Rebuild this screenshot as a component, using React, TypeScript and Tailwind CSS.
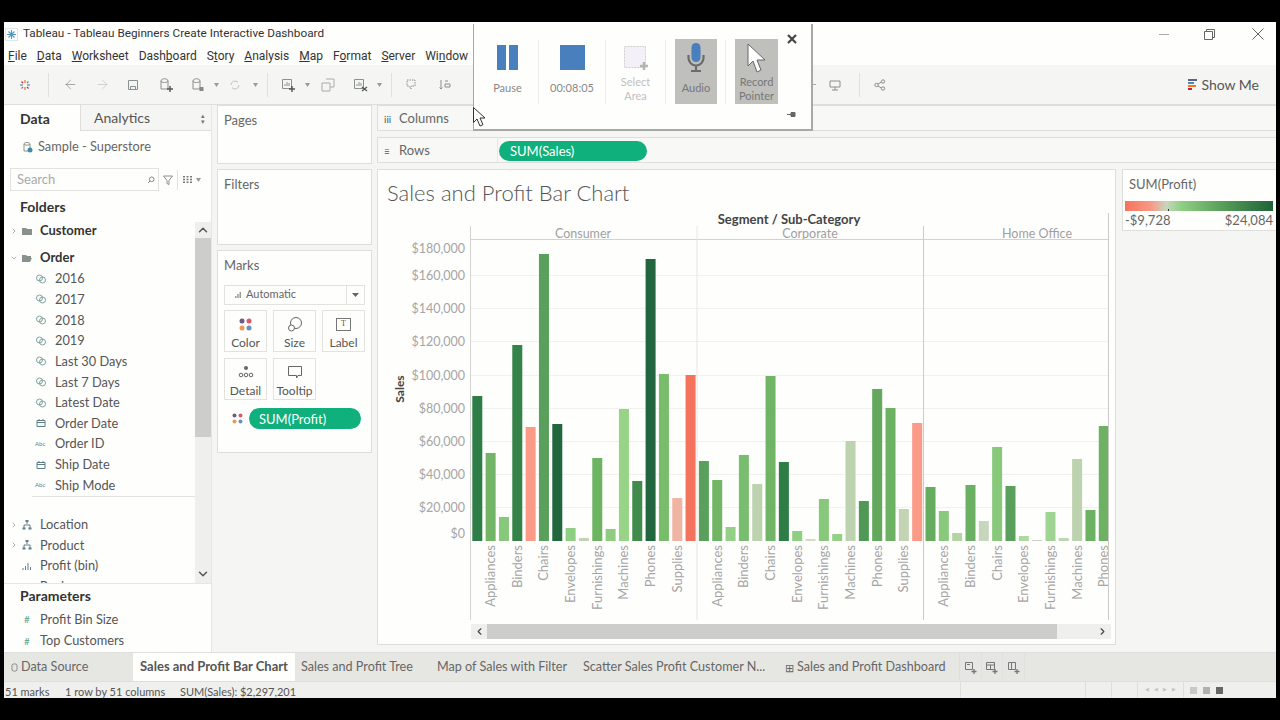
import { ReactNode } from "react";
import { ArrowLeft, ArrowRight, ChevronDown, ChevronLeft, ChevronRight, ChevronUp } from "lucide-react";

const menuItems: [string, string, string][] = [
  ["", "F", "ile"],
  ["", "D", "ata"],
  ["", "W", "orksheet"],
  ["Dash", "b", "oard"],
  ["S", "t", "ory"],
  ["", "A", "nalysis"],
  ["", "M", "ap"],
  ["F", "o", "rmat"],
  ["", "S", "erver"],
  ["Wi", "n", "dow"],
];

const orderFields = [
  { name: "2016", kind: "calc" },
  { name: "2017", kind: "calc" },
  { name: "2018", kind: "calc" },
  { name: "2019", kind: "calc" },
  { name: "Last 30 Days", kind: "calc" },
  { name: "Last 7 Days", kind: "calc" },
  { name: "Latest Date", kind: "calc" },
  { name: "Order Date", kind: "date" },
  { name: "Order ID", kind: "abc" },
  { name: "Ship Date", kind: "date" },
  { name: "Ship Mode", kind: "abc" },
];

const categories = ["Appliances", "Binders", "Chairs", "Envelopes", "Furnishings", "Machines", "Phones", "Supplies"];

const ticks = [
  { label: "$180,000", y: 253 },
  { label: "$160,000", y: 280 },
  { label: "$140,000", y: 313 },
  { label: "$120,000", y: 346 },
  { label: "$100,000", y: 380 },
  { label: "$80,000", y: 413 },
  { label: "$60,000", y: 446 },
  { label: "$40,000", y: 479 },
  { label: "$20,000", y: 512 },
  { label: "$0", y: 538 },
];

// bar top in page pixels + colour, one list per segment
const bars: [number, string][][] = [
  [
    [396, "#2f7d46"], [453, "#72b566"], [517, "#87c87a"], [345, "#358348"], [427, "#fb9a86"], [254, "#58a05b"],
    [424, "#22663d"], [528, "#8fcf82"], [538, "#c3d4b4"], [458, "#6cb462"], [529, "#8fcc80"], [409, "#98d488"],
    [481, "#418c4d"], [259, "#22663f"], [374, "#78bd6c"], [498, "#f0b4a2"], [375, "#f4735c"],
  ],
  [
    [461, "#58a05b"], [480, "#72b566"], [527, "#95d088"], [455, "#79bd6e"], [484, "#bdd2ae"], [376, "#70b566"],
    [462, "#2f7d46"], [531, "#8fcf82"], [539, "#d0dcc5"], [499, "#87c87a"], [534, "#95d088"], [441, "#bdd2ae"],
    [501, "#4f9855"], [389, "#63a85c"], [408, "#6db263"], [509, "#c3d4b4"], [423, "#fb9a86"],
  ],
  [
    [487, "#65ac5e"], [511, "#88c97b"], [533, "#b4d4a4"], [485, "#6cb163"], [521, "#c8d6bc"], [447, "#87c87a"],
    [486, "#58a05b"], [536, "#aed8a0"], [540, "#cccccc"], [512, "#a0d492"], [538, "#bfd6b0"], [459, "#bdd2ae"],
    [510, "#6cb263"], [426, "#6db263"],
  ],
];

const Ico = ({ className = "", w = 16, h = 16, children }: { className?: string; w?: number; h?: number; children: ReactNode }) => (
  <svg width={w} height={h} viewBox={`0 0 ${w} ${h}`} fill="none" stroke="#8a8f90" strokeWidth="1" className={"shrink-0 " + className}>
    {children}
  </svg>
);

const Logo = () => (
  <Ico w={12} h={12}>
    <g strokeWidth="1.2">
      <path d="M6 1v3M6 8v3" stroke="#e8762c" />
      <path d="M1 6h3M8 6h3" stroke="#5b6591" />
      <path d="M2.500 2.500l1.500 1.500M8 8l1.500 1.500" stroke="#c72035" />
      <path d="M9.500 2.500L8 4M4 8L2.500 9.500" stroke="#5b879b" />
    </g>
  </Ico>
);

const TitleIcon = () => (
  <svg width="13" height="13" viewBox="0 0 13 13" fill="none" className="shrink-0">
    <path d="M0.500 0.500h12v12h-12z" stroke="#b9cfdc" strokeDasharray="1 1" />
    <path d="M6.500 2v9M2 6.500h9M3.500 3.500l6 6M9.500 3.500l-6 6" stroke="#4f9cc0" strokeWidth="1.100" />
  </svg>
);

const Cylinder = ({ badge }: { badge: ReactNode }) => (
  <Ico w={14} h={16}>
    <path d="M2 4c0-3 7-3 7 0v8H2zM2 4c0 2 7 2 7 0" />
    {badge}
  </Ico>
);

const Caret = () => (
  <svg width="5" height="4" viewBox="0 0 5 4" className="shrink-0">
    <path d="M0 0h5L2.500 4z" fill="#999" />
  </svg>
);

const Sheet = ({ badge }: { badge: ReactNode }) => (
  <Ico w={15} h={15}>
    <path d="M1.500 2.500h9v9h-9z" />
    <path d="M4 9V7M6 9V5M8 9V6" />
    {badge}
  </Ico>
);

const Toolbar = () => (
  <div className="flex h-10 shrink-0 items-center border-b border-[#dededa] bg-[#f5f5f3]">
    <div className="ml-[15px] w-[29px]">
      <Logo />
    </div>
    <div className="h-6 w-px bg-[#e0e0dc]" />
    <ArrowLeft size={15} strokeWidth={1} color="#777" className="ml-[14px] shrink-0" />
    <ArrowRight size={15} strokeWidth={1} color="#bbb" className="ml-[17px] shrink-0" />
    <Ico w={12} h={12} className="ml-[17px]">
      <path d="M1.500 1.500h9v9h-9zM3.500 10.500v-3h5v3" />
    </Ico>
    <div className="ml-[20px]">
      <Cylinder badge={<path d="M11 9v6M8 12h6" stroke="#555" strokeWidth="1.400" />} />
    </div>
    <div className="ml-[18px]">
      <Cylinder badge={<path d="M8.500 10h4v4h-4z" fill="#888" stroke="none" />} />
    </div>
    <div className="ml-[9px]">
      <Caret />
    </div>
    <Ico w={12} h={12} className="ml-[10px]">
      <path d="M2 6a4 4 0 0 1 7-2.600M10 6a4 4 0 0 1-7 2.600" stroke="#c4c4c4" />
    </Ico>
    <div className="ml-[12px]">
      <Caret />
    </div>
    <div className="ml-[9px] h-6 w-px bg-[#e0e0dc]" />
    <div className="ml-[13px]">
      <Sheet badge={<path d="M11 9v6M8 12h6" stroke="#555" strokeWidth="1.400" />} />
    </div>
    <div className="ml-[9px]">
      <Caret />
    </div>
    <Ico w={14} h={14} className="ml-[11px]">
      <path d="M1 5h8v8H1zM5 1h8v8H9" stroke="#aaa" />
    </Ico>
    <div className="ml-[18px]">
      <Sheet badge={<path d="M9 10l5 4M14 10l-5 4" stroke="#555" strokeWidth="1.300" />} />
    </div>
    <div className="ml-[9px]">
      <Caret />
    </div>
    <div className="ml-[9px] h-6 w-px bg-[#e0e0dc]" />
    <Ico w={14} h={14} className="ml-[13px]">
      <path d="M2 2h8v6H6v3l-2-3H2z" strokeDasharray="1.500 1" />
    </Ico>
    <Ico w={14} h={14} className="ml-[19px]">
      <path d="M3 2v9M1.500 9.500L3 11l1.500-1.500M7 3h3M7 6h5v3H7z" />
    </Ico>
    <div className="ml-[361px] h-px w-[3px] bg-[#aaa]" />
    <Ico w={12} h={12} className="ml-[13px]">
      <path d="M1 2h10v6H1zM6 8v3M3 11h6" />
    </Ico>
    <div className="ml-[18px] h-6 w-px bg-[#e0e0dc]" />
    <Ico w={12} h={12} className="ml-[14px]">
      <circle cx="2.500" cy="6" r="1.700" />
      <circle cx="9" cy="2.500" r="1.700" />
      <circle cx="9" cy="9.500" r="1.700" />
      <path d="M4 5l3.500-2M4 7l3.500 2" />
    </Ico>
    <div className="ml-auto mr-[17px] flex items-center gap-1">
      <svg width="9" height="11" viewBox="0 0 9 11" className="shrink-0">
        <path d="M0 0h9v2H0z" fill="#5b6591" />
        <path d="M0 3h6v2H0z" fill="#5b879b" />
        <path d="M0 6h8v2H0z" fill="#e8762c" />
        <path d="M0 9h4v2H0z" fill="#c72035" />
      </svg>
      <span className="text-[14px] text-[#555]">Show Me</span>
    </div>
  </div>
);

const CalcIcon = () => (
  <Ico w={12} h={12}>
    <circle cx="4.500" cy="5" r="3" stroke="#7fa3a0" />
    <circle cx="7.500" cy="7" r="3" stroke="#7fa3a0" />
  </Ico>
);

const FieldIcon = ({ kind }: { kind: string }) => {
  if (kind === "calc") return <CalcIcon />;
  if (kind === "date")
    return (
      <Ico w={12} h={12}>
        <path d="M2 3.500h8v6H2zM2 5.500h8M4 2v1.500M8 2v1.500" stroke="#5d7f8a" />
      </Ico>
    );
  return <span className="w-3 text-[6px] leading-3 text-[#5d7f8a]">Abc</span>;
};

const Chevron = ({ open }: { open?: boolean }) => (
  <span className="flex w-[17px] shrink-0 pl-[6px]">
    {open ? <ChevronDown size={8} color="#888" /> : <ChevronRight size={8} color="#888" />}
  </span>
);

const HierIcon = () => (
  <Ico w={12} h={12} className="mr-[7px]">
    <path d="M6 2v3M3 9V6h6v3" stroke="#5d7f8a" />
    <path d="M4.500 1h3v2h-3zM1.500 8.500h3v2h-3zM7.500 8.500h3v2h-3z" fill="#5d7f8a" stroke="none" />
  </Ico>
);

const DataPane = () => (
  <div className="flex h-full w-[208px] shrink-0 flex-col border-r border-[#e6e6e3] bg-[#fefefd]">
    <div className="flex h-[26px] items-stretch">
      <div className="flex w-[77px] items-center border-r border-[#dededa] pl-4 text-[14px] font-bold text-[#333]">Data</div>
      <div className="flex flex-1 items-center justify-between border-b border-[#dededa] bg-[#f5f5f3] pl-[13px] pr-[6px] text-[14px] text-[#555]">
        Analytics
        <span className="text-[7px] leading-[6px] text-[#777]">
          ▴<br />▾
        </span>
      </div>
    </div>
    <div className="flex h-[30px] items-center gap-[5px] pl-[18px] pt-[2px] text-[12.800px] text-[#666]">
      <Ico w={11} h={12}>
        <path d="M2 3c0-2 6-2 6 0v7H2zM2 3c0 1.500 6 1.500 6 0" />
        <circle cx="8" cy="9" r="2.500" fill="#3f8ea8" stroke="none" />
      </Ico>
      Sample - Superstore
    </div>
    <div className="ml-[6px] mt-[7px] flex h-[23px] items-center">
      <div className="flex h-[23px] w-[149px] items-center justify-between border border-[#e2e2df] pl-[6px] pr-[3px] text-[13px] text-[#aaa]">
        Search
        <svg width="8" height="8" viewBox="0 0 8 8" fill="none" stroke="#888" className="shrink-0">
          <circle cx="4.700" cy="3.300" r="2.300" />
          <path d="M3 5L1 7" />
        </svg>
      </div>
      <Ico w={12} h={12} className="ml-[3px]">
        <path d="M1.500 2h9L7 6.500V10.500L5 9.500V6.500z" />
      </Ico>
      <div className="ml-[3px] h-5 w-px bg-[#e2e2df]" />
      <svg width="9" height="7" viewBox="0 0 9 7" fill="#777" className="ml-[5px] shrink-0">
        <path d="M0 0h2v1.500H0zM3.500 0h2v1.500h-2zM7 0h2v1.500H7zM0 2.700h2v1.500H0zM3.500 2.700h2v1.500h-2zM7 2.700h2v1.500H7zM0 5.400h2v1.500H0zM3.500 5.400h2v1.500h-2zM7 5.400h2v1.500H7z" />
      </svg>
      <div className="ml-[4px]">
        <Caret />
      </div>
    </div>
    <div className="mt-[5px] h-[22px] pl-4 text-[14px] font-bold leading-[22px] text-[#333]">Folders</div>
    <div className="flex h-[366px] overflow-hidden border-b border-[#e6e6e3]">
      <div className="min-w-0 flex-1 overflow-hidden pt-[3px]">
        <div className="flex h-[20px] items-center text-[13px] font-bold text-[#333]">
          <Chevron />
          <Ico w={12} h={12} className="mr-[7px]">
            <path d="M1 3h4l1 1h5v6H1z" fill="#8a8f90" stroke="none" />
          </Ico>
          Customer
        </div>
        <div className="mt-[7px] flex h-[20px] items-center text-[13px] font-bold text-[#333]">
          <Chevron open />
          <Ico w={12} h={12} className="mr-[7px]">
            <path d="M1 3h4l1 1h4v2H3L1 10zM3 6h8l-2 4H1z" fill="#8a8f90" stroke="none" />
          </Ico>
          Order
        </div>
        <div className="mt-[0.500px] flex flex-col">
          {orderFields.map((f) => (
            <div key={f.name} className="flex h-[20.670px] items-center pl-[31px] text-[12.800px] text-[#555]">
              <span className="mr-2 flex w-3 justify-center">
                <FieldIcon kind={f.kind} />
              </span>
              {f.name}
            </div>
          ))}
        </div>
        <div className="ml-7 border-b border-[#e3e3e0]" />
        <div className="mt-[17.500px] flex h-[20.670px] items-center text-[12.800px] text-[#555]">
          <Chevron />
          <HierIcon />
          Location
        </div>
        <div className="flex h-[20.670px] items-center text-[12.800px] text-[#555]">
          <Chevron />
          <HierIcon />
          Product
        </div>
        <div className="flex h-[20.670px] items-center pl-[17px] text-[12.800px] text-[#555]">
          <Ico w={12} h={12} className="mr-[7px]">
            <path d="M2 10V8M4.500 10V6M7 10V3M9.500 10V7" stroke="#5d7f8a" />
          </Ico>
          Profit (bin)
        </div>
        <div className="flex h-[20.670px] items-center pl-[36px] text-[12.800px] text-[#555]">Region</div>
      </div>
      <div className="mt-[4px] flex w-[16px] shrink-0 flex-col items-center bg-[#efefed]">
        <ChevronUp size={14} strokeWidth={2.500} color="#555" className="h-[16px] shrink-0" />
        <div className="h-[199px] w-full bg-[#cdcdcb]" />
        <ChevronDown size={14} strokeWidth={2.500} color="#555" className="mb-[2px] mt-auto shrink-0" />
      </div>
    </div>
    <div className="pl-4 pt-[1px] text-[14px] font-bold leading-[22px] text-[#333]">Parameters</div>
    <div className="mt-[2px] flex h-[21px] items-center pl-[17px] text-[12.800px] text-[#555]">
      <span className="mr-[7px] w-3 text-center text-[10px] text-[#5aa28a]">#</span>Profit Bin Size
    </div>
    <div className="mt-[1px] flex h-[20px] items-center pl-[17px] text-[12.800px] text-[#555]">
      <span className="mr-[7px] w-3 text-center text-[10px] text-[#5aa28a]">#</span>Top Customers
    </div>
  </div>
);

const MarkCard = ({ label, icon }: { label: string; icon: ReactNode }) => (
  <div className="flex h-[42px] w-[43px] flex-col items-center border border-[#e2e2df] pt-[5px] text-[12px] text-[#555]">
    <div className="flex h-[17px] items-center">{icon}</div>
    <span className="mt-[2px] leading-[15px]">{label}</span>
  </div>
);

const CardsPane = () => (
  <div className="flex h-full w-[160px] shrink-0 flex-col gap-[5px] pl-[5px]">
    <div className="h-[59px] border border-[#dededa] bg-[#fefefd] px-[6px] pt-[5px] text-[13px] text-[#666]">Pages</div>
    <div className="h-[76px] border border-[#dededa] bg-[#fefefd] px-[6px] pt-[5px] text-[13px] text-[#666]">Filters</div>
    <div className="h-[203px] border border-[#dededa] bg-[#fefefd] px-[6px] pt-[5px]">
      <div className="text-[13px] text-[#666]">Marks</div>
      <div className="mt-[9px] flex h-[20px] w-[141px] items-center border border-[#e2e2df] pl-[10px] text-[11px] text-[#666]">
        <svg width="6" height="6" viewBox="0 0 6 6" fill="#999" className="mr-[5px] shrink-0">
          <path d="M0 6V4h1.500v2zM2.200 6V2h1.500v4zM4.500 6V0H6v6z" />
        </svg>
        Automatic
        <div className="ml-auto flex h-full w-[18px] items-center justify-center border-l border-[#e2e2df]">
          <svg width="7" height="4" viewBox="0 0 7 4" className="shrink-0">
            <path d="M0 0h7L3.500 4z" fill="#666" />
          </svg>
        </div>
      </div>
      <div className="mt-[5px] flex gap-[6px]">
        <MarkCard
          label="Color"
          icon={
            <svg width="13" height="13" viewBox="0 0 13 13" className="shrink-0">
              <circle cx="3" cy="3" r="2.500" fill="#6d5a88" />
              <circle cx="10" cy="3" r="2.500" fill="#dd5a64" />
              <circle cx="3" cy="10" r="2.500" fill="#ea9a55" />
              <circle cx="10" cy="10" r="2.500" fill="#6a8fc0" />
            </svg>
          }
        />
        <MarkCard
          label="Size"
          icon={
            <Ico w={16} h={16}>
              <circle cx="9" cy="7" r="5.500" stroke="#666" />
              <circle cx="4.500" cy="12" r="3" stroke="#666" fill="#fefefd" />
            </Ico>
          }
        />
        <MarkCard
          label="Label"
          icon={
            <div className="flex h-[13px] w-[15px] items-center justify-center border border-[#777] font-['Liberation_Serif',serif] text-[8px] leading-none text-[#555]">T</div>
          }
        />
      </div>
      <div className="mt-[6px] flex gap-[6px]">
        <MarkCard
          label="Detail"
          icon={
            <svg width="16" height="14" viewBox="0 0 16 14" fill="none" stroke="#666" className="shrink-0">
              <circle cx="8" cy="3" r="2" fill="#666" stroke="none" />
              <circle cx="3" cy="10" r="1.800" />
              <circle cx="8" cy="10" r="1.800" />
              <circle cx="13" cy="10" r="1.800" />
            </svg>
          }
        />
        <MarkCard
          label="Tooltip"
          icon={
            <Ico w={16} h={14}>
              <path d="M1.500 1.500h13v9H11L9.500 13V10.500h-8z" stroke="#666" />
            </Ico>
          }
        />
      </div>
      <div className="mt-[8px] flex items-center">
        <svg width="11" height="11" viewBox="0 0 11 11" className="ml-[8px] shrink-0">
          <circle cx="2.500" cy="2.500" r="2" fill="#6d5a88" />
          <circle cx="8.500" cy="2.500" r="2" fill="#dd5a64" />
          <circle cx="2.500" cy="8.500" r="2" fill="#ea9a55" />
          <circle cx="8.500" cy="8.500" r="2" fill="#6a8fc0" />
        </svg>
        <div className="ml-[6px] flex h-[21px] w-[112px] items-center rounded-full bg-[#0fb07c] pl-[10px] pt-[3px] text-[13px] text-white">SUM(Profit)</div>
      </div>
    </div>
  </div>
);

const Shelf = ({ icon, label, children }: { icon: string; label: string; children?: ReactNode }) => (
  <div className="flex h-[26px] items-center border border-r-0 border-[#dededa] bg-[#f8f8f6]">
    <div className="flex h-full w-[120px] shrink-0 items-center gap-2 border-r border-[#e8e8e5] pl-[6px] pt-[2px] text-[13px] text-[#666]">
      <span className="w-[7px] text-[10px] leading-none text-[#555]">{icon}</span>
      {label}
    </div>
    {children}
  </div>
);

const Chart = () => (
  <svg width="737" height="418" viewBox="378 206 737 418" className="block font-[Lato,sans-serif]">
    <defs>
      <clipPath id="plot">
        <rect x="471" y="206" width="637" height="418" />
      </clipPath>
    </defs>
    <text x="789" y="224" textAnchor="middle" fontSize="13" fontWeight="700" fill="#444">
      Segment / Sub-Category
    </text>
    {[
      ["Consumer", 583],
      ["Corporate", 810],
      ["Home Office", 1037],
    ].map(([t, x]) => (
      <text key={t} x={x} y="238" textAnchor="middle" fontSize="12.500" fill="#a0a0a0">
        {t}
      </text>
    ))}
    {[275, 308, 341, 375, 408, 441, 474, 507].map((y) => (
      <line key={y} x1="471" x2="1108" y1={y + 0.5} y2={y + 0.5} stroke="#f1f1ef" />
    ))}
    <line x1="471" x2="1108" y1="239.500" y2="239.500" stroke="#d2d2d0" />
    <line x1="470.500" x2="470.500" y1="226" y2="620" stroke="#d2d2d0" />
    <line x1="697" x2="697" y1="226" y2="620" stroke="#e6e6e4" />
    <line x1="923.500" x2="923.500" y1="226" y2="620" stroke="#cbcbc9" />
    <line x1="1108.500" x2="1108.500" y1="213" y2="620" stroke="#cbcbc9" />
    {ticks.map((t) => (
      <text key={t.label} x="465" y={t.y} textAnchor="end" fontSize="12.500" fill="#a5a5a5">
        {t.label}
      </text>
    ))}
    <text transform="rotate(-90 404 389)" x="404" y="389" textAnchor="middle" fontSize="12" fontWeight="700" fill="#444">
      Sales
    </text>
    <g clipPath="url(#plot)">
      {bars.map((seg, s) =>
        seg.map(([top, color], i) => (
          <rect key={s + "-" + i} x={472.300 + s * 226.600 + i * 13.330} y={top} width="10" height={541 - top} fill={color} />
        )),
      )}
      {[0, 1, 2].map((s) =>
        categories.slice(0, s === 2 ? 7 : 8).map((c, n) => {
          const x = 472.300 + s * 226.600 + (2 * n + 1) * 13.330 + 9.500;
          return (
            <text key={s + c} transform={`rotate(-90 ${x} 545)`} x={x} y="545" textAnchor="end" fontSize="13" fill="#a5a5a5">
              {c}
            </text>
          );
        }),
      )}
    </g>
  </svg>
);

const ChartCard = () => (
  <div className="h-[476px] w-[739px] shrink-0 border border-[#dededa] bg-[#fefefd]">
    <div className="h-[36px] pl-[9px] pt-[9px] text-[22px] font-light leading-[28px] text-[#555]">Sales and Profit Bar Chart</div>
    <Chart />
    <div className="ml-[93px] flex h-[15px] w-[640px] items-center bg-[#efefed]">
      <span className="flex w-[16px] justify-center">
        <ChevronLeft size={11} strokeWidth={2.500} color="#444" />
      </span>
      <div className="h-full w-[570px] bg-[#cdcdcb]" />
      <span className="ml-auto mr-[1px] flex w-[16px] justify-center">
        <ChevronRight size={11} strokeWidth={2.500} color="#444" />
      </span>
    </div>
  </div>
);

const LegendCard = () => (
  <div className="ml-[6px] h-[62px] flex-1 border border-r-0 border-[#dededa] bg-[#fefefd] px-[2px] pt-[5px] text-[#666]">
    <div className="pl-[4px] text-[13px] leading-[18px]">SUM(Profit)</div>
    <div className="relative mt-[8px] h-[10px] w-[148px] bg-[linear-gradient(90deg,#f4735c_0%,#f79b88_18%,#c8d6bc_28%,#8fcf82_38%,#58a05b_65%,#1f6239_100%)]">
      <span className="absolute bottom-0 left-[43px] h-[2px] w-px bg-[#333]" />
    </div>
    <div className="flex w-[148px] justify-between text-[13px] leading-[19px]">
      <span>-$9,728</span>
      <span>$24,084</span>
    </div>
  </div>
);

const RecorderButton = ({ label, className = "", children }: { label: ReactNode; className?: string; children: ReactNode }) => (
  <div className={"flex h-[65px] flex-col items-center text-center text-[11px] leading-[14px] " + className}>
    {children}
    {label}
  </div>
);

const Sep = () => <div className="mt-[1px] h-[64px] w-px bg-[#eeeeec]" />;

const RecorderPopup = () => (
  <div className="absolute left-[473px] top-[24px] flex h-[107px] w-[340px] border-b-2 border-l border-r-2 border-[#a8a8a4] bg-[#fefefd] pt-[15px]">
    <RecorderButton label={<span className="mt-[11px] text-[#888]">Pause</span>} className="w-[67px]">
      <div className="mt-[6px] flex h-[25px] gap-[3px]">
        <div className="w-[9px] bg-[#4a7fbd]" />
        <div className="w-[9px] bg-[#4a7fbd]" />
      </div>
    </RecorderButton>
    <div className="-ml-[3px]">
      <Sep />
    </div>
    <RecorderButton label={<span className="mt-[11px] text-[#888]">00:08:05</span>} className="w-[66px]">
      <div className="mt-[6px] h-[25px] w-[25px] bg-[#4a7fbd]" />
    </RecorderButton>
    <Sep />
    <RecorderButton label={<span className="mt-[2px] text-[#c0c0c0]">Select<br />Area</span>} className="w-[59px]">
      <svg width="26" height="27" viewBox="0 0 26 27" className="ml-[3px] mt-[7px] shrink-0">
        <path d="M0.500 0.500h21v21h-21z" fill="#f4f0f7" stroke="#cfcfcf" strokeDasharray="2 1" />
        <path d="M20 16v8M16 20h8" stroke="#b5b5b5" strokeWidth="2.500" />
      </svg>
    </RecorderButton>
    <Sep />
    <div className="ml-[9px] w-[42px]">
      <RecorderButton label={<span className="mt-[8px] text-[#777]">Audio</span>} className="bg-[#bfbfbc]">
        <svg width="18" height="30" viewBox="0 0 18 30" className="mt-[4px] shrink-0">
          <path d="M1.500 12v3a7.500 7.500 0 0 0 15 0v-3M9 22.500V27M4 28h10" fill="none" stroke="#6b6b6b" strokeWidth="2.200" />
          <rect x="4.500" y="0" width="9" height="19" rx="4.500" fill="#4a7fbd" />
        </svg>
      </RecorderButton>
    </div>
    <div className="ml-[8px]">
      <Sep />
    </div>
    <div className="ml-[9px] w-[43px]">
      <RecorderButton label={<span className="mt-[1px] text-[#777]">Record<br />Pointer</span>} className="bg-[#bfbfbc]">
        <svg width="20" height="31" viewBox="0 0 20 31" className="mt-[4px] shrink-0">
          <path d="M1 1v22l5-5 4 11 4-2-4-10h8z" fill="#fff" stroke="#666" />
        </svg>
      </RecorderButton>
    </div>
    <svg width="10" height="10" viewBox="0 0 10 10" className="absolute right-[14px] top-[10px]">
      <path d="M1 1l8 8M9 1l-8 8" stroke="#444" strokeWidth="2.200" />
    </svg>
    <svg width="10" height="7" viewBox="0 0 10 7" className="absolute bottom-[11px] right-[14px]">
      <path d="M0 3.500h4M4 1.500h4v4H4z" stroke="#666" fill="#666" />
    </svg>
  </div>
);

const bottomTabs = [
  { label: "Sales and Profit Tree", w: "w-[136px]" },
  { label: "Map of Sales with Filter", w: "w-[146px]" },
  { label: "Scatter Sales Profit Customer N...", w: "w-[207px]" },
];

const TabBar = () => (
  <div className="flex h-[30px] shrink-0 items-stretch border-y border-[#dededa] bg-[#e6e6e3] text-[12.600px] text-[#666]">
    <div className="flex w-[129px] items-center gap-[3px] pl-[6px]">
      <span className="flex w-[8px] justify-center">
        <Ico w={7} h={9}>
          <path d="M1 2c0-1.500 5-1.500 5 0v5c0 1.500-5 1.500-5 0z" />
        </Ico>
      </span>
      Data Source
    </div>
    <div className="flex w-[162px] items-center justify-center bg-[#fefefd] text-[13px] font-bold text-[#555]">Sales and Profit Bar Chart</div>
    {bottomTabs.map((t) => (
      <div key={t.label} className={"flex items-center pl-[6px] " + t.w}>
        {t.label}
      </div>
    ))}
    <div className="flex w-[176px] items-center gap-[3px] border-r border-[#dededa] pl-[1px]">
      <span className="text-[11px] leading-none">⊞</span>
      Sales and Profit Dashboard
    </div>
    {["M1.500 1.500h7v7h-7zM3 3.500h3", "M1.500 1.500h8v7h-8zM1.500 4h8M5.500 4v4.500", "M1.500 1.500h3v7h-3zM4.500 1.500h4v7h-4z"].map((d) => (
      <div key={d} className="flex w-[21.500px] items-center justify-center border-r border-[#e0e0dd]">
        <svg width="13" height="13" viewBox="0 0 13 13" fill="none" stroke="#777" className="shrink-0">
          <path d={d} />
          <path d="M10 8v5M7.500 10.500h5" strokeWidth="1.300" />
        </svg>
      </div>
    ))}
  </div>
);

const StatusBar = () => (
  <div className="flex h-4 shrink-0 items-center bg-[#efefed] text-[11px] text-[#555]">
    <span className="w-[61px] pl-[1px] pt-[4px]">51 marks</span>
    <span className="w-[115px] pt-[4px]">1 row by 51 columns</span>
    <span className="w-[780px] pt-[4px]">SUM(Sales): $2,297,201</span>
    <span className="h-full w-[125px] border-l border-[#dededa]" />
    <span className="h-full w-[26px] border-l border-[#dededa]" />
    <span className="h-full w-[26px] border-l border-[#dededa]" />
    <span className="flex h-full w-[46px] items-center justify-center gap-[5px] border-l border-[#dededa] text-[5px] text-[#c4c4c4]">
      <span>◀</span>
      <span>◀</span>
      <span>▶</span>
      <span>▶</span>
    </span>
    <span className="flex h-full flex-1 items-center gap-[6px] border-l border-[#dededa] pl-[6px]">
      <span className="h-[7px] w-[7px] bg-[#c8c8c8]" />
      <span className="h-[7px] w-[7px] bg-[#b0b0b0]" />
      <span className="h-[7px] w-[7px] bg-[#666]" />
    </span>
  </div>
);

const App = () => {
  return (
    <div className="relative h-[720px] w-[1280px] overflow-hidden bg-black px-1 py-[22px] font-[Lato,sans-serif]">
      <div className="flex h-full flex-col bg-[#f5f5f3]">
        <div className="flex h-[22px] shrink-0 items-center bg-[#fefefd] pl-[1px] pt-[2px] font-[Roboto,sans-serif] text-[11.750px] text-[#333]">
          <TitleIcon />
          <span className="ml-[5px]">Tableau - Tableau Beginners Create Interactive Dashboard</span>
          <div className="ml-auto flex items-center">
            <div className="mr-[35px] h-px w-[10px] bg-[#aaa]" />
            <Ico w={11} h={11} className="mr-[37px]">
              <path d="M0.500 2.500h8v8h-8zM2.500 2.500v-2h8v8h-2" stroke="#666" />
            </Ico>
            <svg width="12" height="12" viewBox="0 0 12 12" className="mr-[12px] shrink-0">
              <path d="M0.500 0.500l11 11M11.500 0.500l-11 11" stroke="#666" />
            </svg>
          </div>
        </div>
        <div className="flex h-[21px] shrink-0 items-center gap-[10px] bg-[#fefefd] pl-1 pt-[3px] font-[Roboto,sans-serif] text-[12px] text-[#333]">
          {menuItems.map(([a, u, b]) => (
            <span key={a + u + b}>
              {a}
              <u>{u}</u>
              {b}
            </span>
          ))}
        </div>
        <Toolbar />
        <div className="flex min-h-0 flex-1">
          <DataPane />
          <CardsPane />
          <div className="flex min-w-0 flex-1 flex-col gap-[6px] pl-[5px]">
            <Shelf icon="iii" label="Columns" />
            <Shelf icon="≡" label="Rows">
              <div className="ml-[1px] mt-[2px] flex h-5 w-[148px] items-center rounded-full bg-[#0fb07c] pl-[11px] pt-[2px] text-[13px] text-white">SUM(Sales)</div>
            </Shelf>
            <div className="flex items-start">
              <ChartCard />
              <LegendCard />
            </div>
          </div>
        </div>
        <TabBar />
        <StatusBar />
      </div>
      <RecorderPopup />
      <svg width="14" height="20" viewBox="0 0 14 20" className="absolute left-[473px] top-[107px]">
        <path d="M0.500 0.500v15l3.500-3.500 3 7 3-1.300-3-6.700h5z" fill="#fff" stroke="#333" />
      </svg>
    </div>
  );
};

export default App;
